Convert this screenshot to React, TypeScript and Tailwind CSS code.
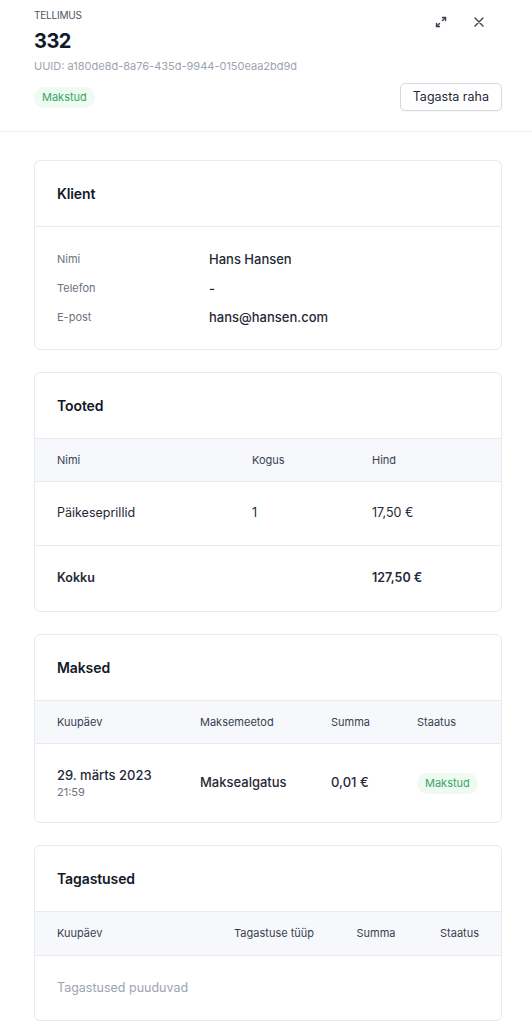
import React from "react";

function Badge() {
  return (
    <span className="inline-flex items-center h-[21px] px-[8px] rounded-full bg-[#eefaf2] text-[#35a862] text-[11px] leading-none">
      Makstud
    </span>
  );
}

function CardTitle({ children }: { children: React.ReactNode }) {
  return (
    <div className="h-[66px] flex items-center px-[22px] border-b border-[#e8eaf0]">
      <h2 className="text-[14px] font-semibold text-[#111827] tracking-[-0.1px]">{children}</h2>
    </div>
  );
}

function Card({ children }: { children: React.ReactNode }) {
  return <div className="border border-[#e8eaf0] rounded-[6px] bg-white overflow-hidden">{children}</div>;
}

export default function App() {
  return (
    <div className="w-[532px] min-h-[1024px] bg-white font-['Inter',sans-serif] text-[#1f2937]">
      {/* Header */}
      <div className="relative pl-[34px] pr-[30px] pt-[8px] pb-[20px] border-b border-[#eef0f5]">
        <div className="text-[10px] text-[#4b5563] tracking-[-0.2px] leading-[14px]">TELLIMUS</div>
        <div className="text-[20px] font-bold text-[#111827] leading-[26px] mt-[6px] tracking-[-0.5px]">332</div>
        <div className="text-[11px] text-[#9ca3af] leading-[16px] mt-[4px]">UUID: a180de8d-8a76-435d-9944-0150eaa2bd9d</div>
        <div className="flex items-center justify-between mt-[9px]">
          <Badge />
          <button className="h-[28px] px-[12px] border border-[#d5d9e0] rounded-[5px] text-[12.5px] text-[#1f2937] bg-white shadow-[0_1px_1px_rgba(0,0,0,0.04)]">
            Tagasta raha
          </button>
        </div>
        <div className="absolute top-[15px] right-[46px] flex items-center gap-[24px] text-[#374151]">
          <svg width="14" height="14" viewBox="0 0 14 14" fill="none" stroke="currentColor" strokeWidth="1.4" strokeLinecap="round" strokeLinejoin="round">
            <path d="M8.5 2.5h3v3" />
            <path d="M11.5 2.5L8.5 5.5" />
            <path d="M5.5 11.5h-3v-3" />
            <path d="M2.5 11.5L5.5 8.5" />
          </svg>
          <svg width="14" height="14" viewBox="0 0 14 14" fill="none" stroke="currentColor" strokeWidth="1.4" strokeLinecap="round">
            <path d="M3 3l8 8M11 3l-8 8" />
          </svg>
        </div>
      </div>

      <div className="pl-[34px] pr-[30px] pt-[28px] pb-[4px] flex flex-col gap-[22px]">
        {/* Klient */}
        <Card>
          <CardTitle>Klient</CardTitle>
          <div className="px-[22px] pt-[23px] pb-[22px] flex flex-col gap-[10px]">
            {[
              ["Nimi", "Hans Hansen"],
              ["Telefon", "-"],
              ["E-post", "hans@hansen.com"],
            ].map(([l, v]) => (
              <div key={l} className="flex items-center h-[19px]">
                <div className="w-[152px] text-[11px] text-[#6b7280]">{l}</div>
                <div className="text-[13px] font-medium text-[#1f2937]">{v}</div>
              </div>
            ))}
          </div>
        </Card>

        {/* Tooted */}
        <Card>
          <CardTitle>Tooted</CardTitle>
          <div className="flex items-center h-[43px] px-[22px] bg-[#f7f8fb] border-b border-[#e8eaf0] text-[11px] text-[#374151]">
            <div className="w-[195px]">Nimi</div>
            <div className="w-[120px]">Kogus</div>
            <div>Hind</div>
          </div>
          <div className="flex items-center h-[64px] px-[22px] border-b border-[#e8eaf0] text-[12.5px] text-[#1f2937]">
            <div className="w-[195px]">Päikeseprillid</div>
            <div className="w-[120px]">1</div>
            <div>17,50 €</div>
          </div>
          <div className="flex items-center h-[65px] px-[22px] text-[12.5px] font-semibold text-[#1f2937]">
            <div className="w-[315px]">Kokku</div>
            <div>127,50 €</div>
          </div>
        </Card>

        {/* Maksed */}
        <Card>
          <CardTitle>Maksed</CardTitle>
          <div className="flex items-center h-[43px] px-[22px] bg-[#f7f8fb] border-b border-[#e8eaf0] text-[11px] text-[#374151]">
            <div className="w-[143px]">Kuupäev</div>
            <div className="w-[131px]">Maksemeetod</div>
            <div className="w-[86px]">Summa</div>
            <div>Staatus</div>
          </div>
          <div className="flex items-center h-[78px] px-[22px] text-[12.5px] text-[#1f2937]">
            <div className="w-[143px]">
              <div className="text-[13px] font-medium leading-[17px]">29. märts 2023</div>
              <div className="text-[11px] text-[#6b7280] leading-[15px] mt-[1px]">21:59</div>
            </div>
            <div className="w-[131px] text-[13px] font-medium">Maksealgatus</div>
            <div className="w-[86px] text-[13px] font-medium">0,01 €</div>
            <div>
              <Badge />
            </div>
          </div>
        </Card>

        {/* Tagastused */}
        <Card>
          <CardTitle>Tagastused</CardTitle>
          <div className="flex items-center h-[44px] px-[22px] bg-[#f7f8fb] border-b border-[#e8eaf0] text-[11px] text-[#374151]">
            <div className="w-[178px]">Kuupäev</div>
            <div className="w-[123px]">Tagastuse tüüp</div>
            <div className="w-[84px]">Summa</div>
            <div>Staatus</div>
          </div>
          <div className="flex items-center h-[64px] px-[22px] text-[12.5px] text-[#9ca3af]">
            Tagastused puuduvad
          </div>
        </Card>
      </div>
    </div>
  );
}
